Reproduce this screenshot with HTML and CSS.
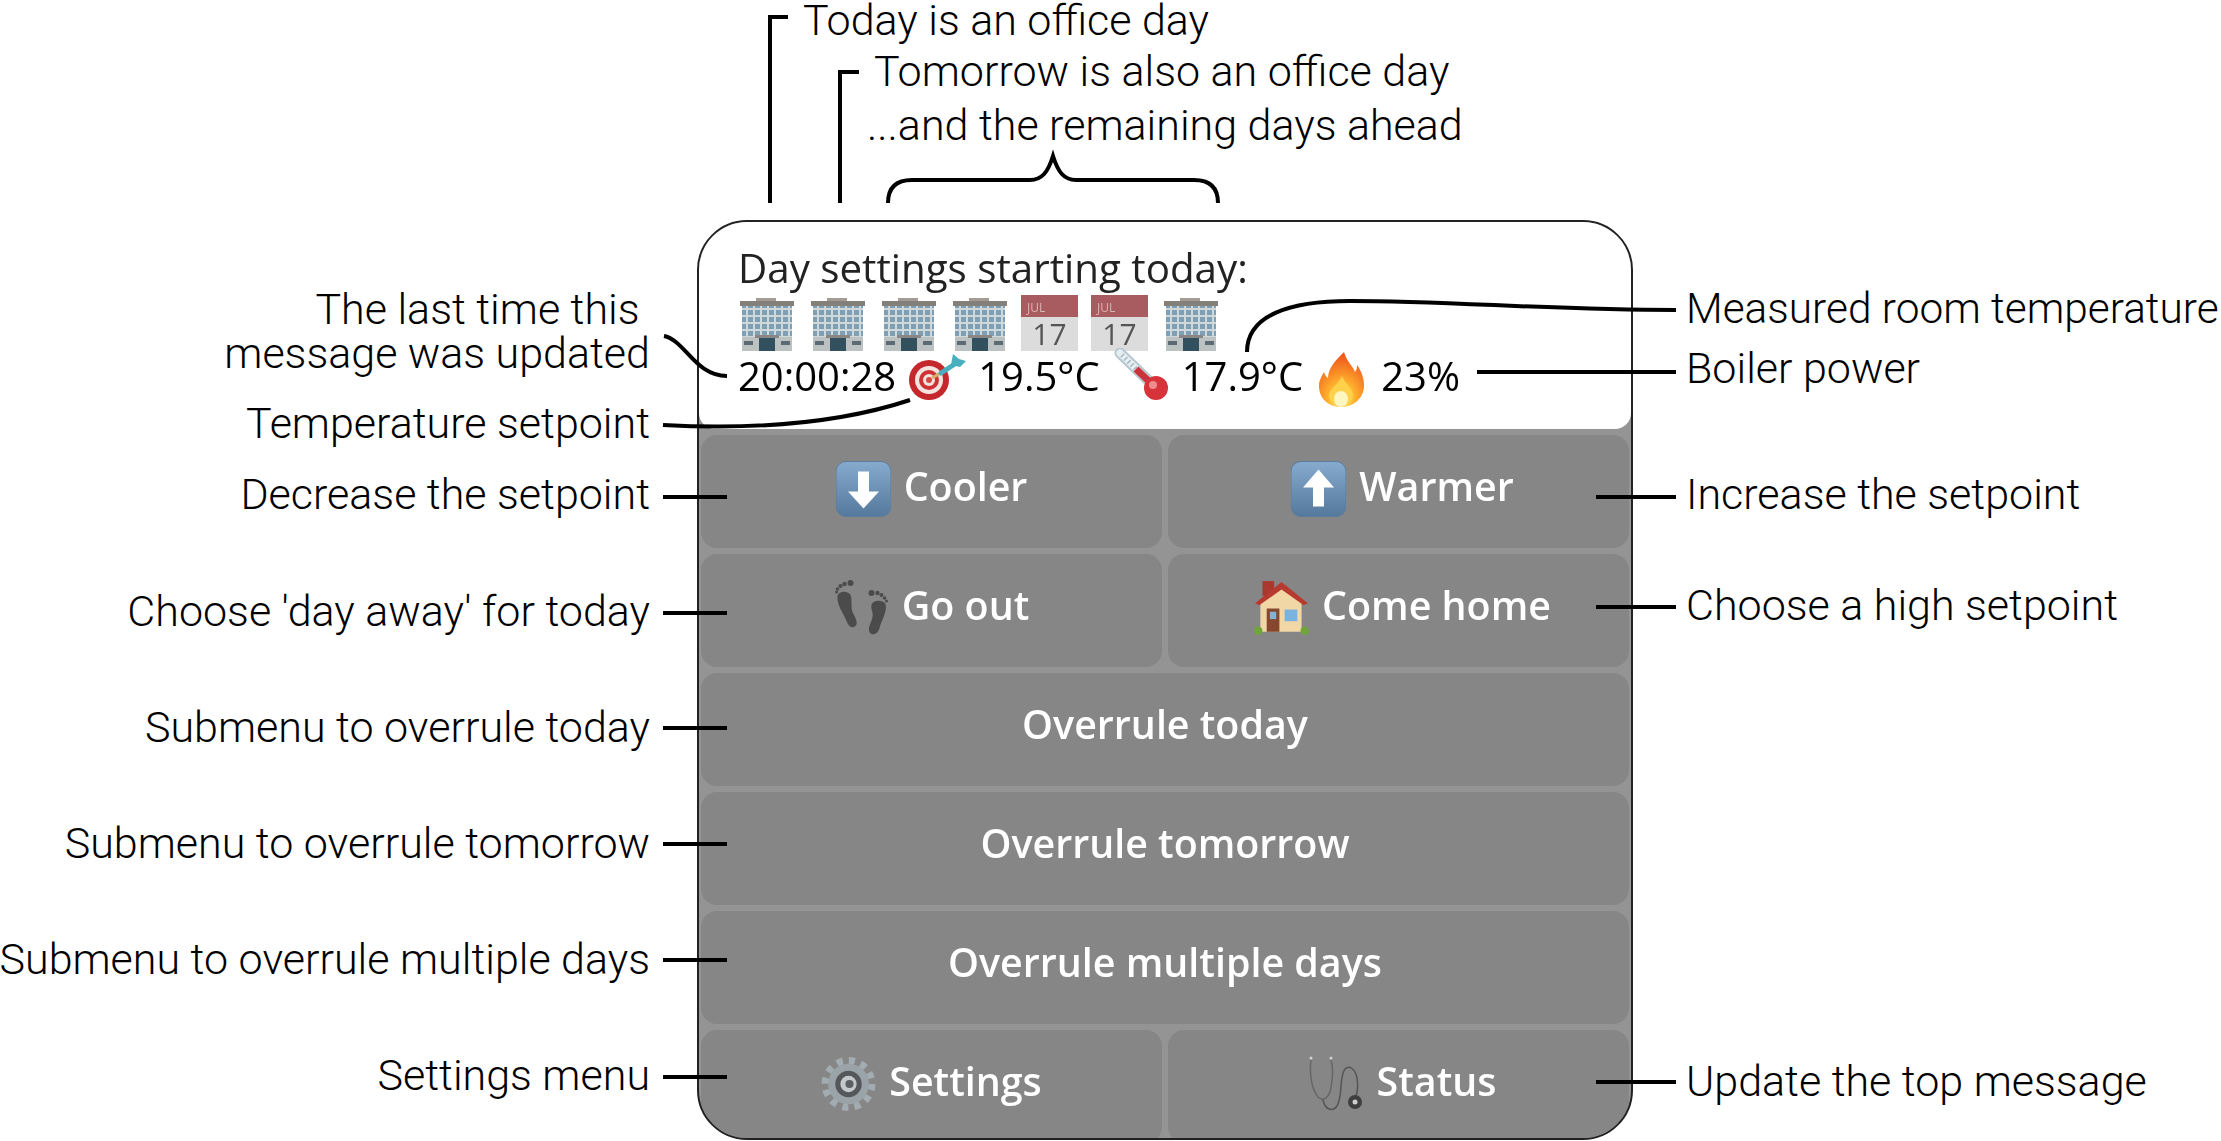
FILE: index.html
```html
<!DOCTYPE html>
<html lang="en">
<head>
    <meta charset="UTF-8">
    <title>Thermostat bot menu</title>
    <link rel="stylesheet" href="styles.css">
</head>
<body>
    <svg class="defs" width="0" height="0">
        <defs>
            <pattern id="windows" width="7" height="7" patternUnits="userSpaceOnUse">
                <rect width="7" height="7" fill="#cfd8db"/>
                <rect x="1" y="1" width="5" height="5" fill="#7f9fb4"/>
            </pattern>
            <linearGradient id="blue" x1="0" y1="0" x2="0" y2="1">
                <stop offset="0" stop-color="#86abcf"/>
                <stop offset="1" stop-color="#55799d"/>
            </linearGradient>
            <radialGradient id="fire" cx="0.5" cy="0.85" r="0.8">
                <stop offset="0" stop-color="#fff3a8"/>
                <stop offset="0.35" stop-color="#ffb52e"/>
                <stop offset="1" stop-color="#f0551c"/>
            </radialGradient>
            <symbol id="building" viewBox="0 0 54 56">
                <rect x="16" y="3" width="20" height="4" fill="#a39c96"/>
                <rect y="6" width="54" height="5" fill="#857f7a"/>
                <rect x="2" y="11" width="50" height="45" fill="url(#windows)"/>
                <rect x="2" y="42" width="50" height="14" fill="#bcc1c2"/>
                <rect x="4" y="46" width="9" height="4" fill="#5b6a73"/>
                <rect x="41" y="46" width="9" height="4" fill="#5b6a73"/>
                <rect x="15" y="40" width="24" height="3" fill="#8a8683"/>
                <rect x="19" y="43" width="16" height="13" fill="#33505f"/>
            </symbol>
            <symbol id="target" viewBox="0 0 60 48">
                <circle cx="23" cy="28" r="20" fill="#c4282c"/>
                <circle cx="23" cy="28" r="14" fill="#f4e4e0"/>
                <circle cx="23" cy="28" r="10" fill="#cf3236"/>
                <circle cx="23" cy="28" r="6" fill="#f4e4e0"/>
                <circle cx="23" cy="28" r="3" fill="#d9483f"/>
                <path d="M26 26 L38 19" stroke="#d7b26a" stroke-width="3"/>
                <path d="M35 21 L52 10" stroke="#49aebd" stroke-width="5" stroke-linecap="round"/>
                <path d="M45 13 L47 2 L53 7 L60 9 L54 15 Z" fill="#49aebd"/>
            </symbol>
            <symbol id="thermo" viewBox="0 0 55 56">
                <path d="M6 5 L40 38" stroke="#b7c8d2" stroke-width="11" stroke-linecap="round"/>
                <path d="M6 5 L40 38" stroke="#e6eef2" stroke-width="7" stroke-linecap="round"/>
                <path d="M8 7 L22 21" stroke="#a9b8c1" stroke-width="5" stroke-dasharray="1.500 3"/>
                <path d="M22 21 L40 38" stroke="#c9343c" stroke-width="7"/>
                <circle cx="42" cy="40" r="12" fill="#d6333b"/>
                <circle cx="39" cy="37" r="4" fill="#f08a8c"/>
            </symbol>
            <symbol id="flame" viewBox="0 0 45 55">
                <path d="M25 0 C28 10 34 14 36 20 C38 18 38 15 38 13 C43 20 45 27 45 33 C45 46 35 55 22 55 C9 55 0 46 0 34 C0 28 3 24 5 20 C6 23 7 25 9 26 C9 16 17 8 25 0 Z" fill="url(#fire)"/>
                <path d="M23 24 C26 32 34 36 34 43 C34 50 28 55 22 55 C15 55 10 50 10 43 C10 37 19 33 23 24 Z" fill="#ffd04a"/>
                <ellipse cx="22" cy="47" rx="7" ry="8" fill="#fff6c0"/>
            </symbol>
            <symbol id="arrow-down" viewBox="0 0 55 55">
                <rect width="55" height="55" rx="10" fill="url(#blue)" stroke="#5b7d9e"/>
                <path d="M22 10 H33 V30 H43 L27.500 47 L12 30 H22 Z" fill="#fff"/>
            </symbol>
            <symbol id="arrow-up" viewBox="0 0 55 55">
                <rect width="55" height="55" rx="10" fill="url(#blue)" stroke="#5b7d9e"/>
                <path d="M22 45 H33 V26 H43 L27.500 8 L12 26 H22 Z" fill="#fff"/>
            </symbol>
            <symbol id="feet" viewBox="0 0 54 56">
                <g fill="#4b4b4b">
                    <path d="M3 16 C4 11 13 10 16 15 C18 21 16 26 18 32 C21 38 24 43 21 46 C17 49 14 46 12 41 C9 33 2 25 3 16 Z"/>
                    <circle cx="16" cy="3" r="3"/><circle cx="10" cy="4" r="2.200"/><circle cx="6" cy="6" r="2"/><circle cx="3" cy="9" r="1.800"/><circle cx="2" cy="12" r="1.500"/>
                    <path d="M37 25 C38 20 48 19 51 24 C53 32 47 40 45 48 C43 55 37 56 35 52 C33 48 37 42 38 37 C39 32 36 30 37 25 Z"/>
                    <circle cx="37" cy="13" r="3"/><circle cx="43" cy="13" r="2.200"/><circle cx="47" cy="15" r="2"/><circle cx="50" cy="18" r="1.800"/><circle cx="52" cy="21" r="1.500"/>
                </g>
            </symbol>
            <symbol id="house" viewBox="0 0 52 53">
                <rect x="8" y="1" width="11" height="14" fill="#a9392f"/>
                <path d="M6 19 L26 5 L45 19 V49 H6 Z" fill="#f1d6a6"/>
                <path d="M1 22 L26 2 L51 22 L47 24 L26 9 L5 24 Z" fill="#b73a30"/>
                <rect x="12" y="27" width="12" height="22" fill="#85472e"/>
                <rect x="15" y="30" width="6" height="7" fill="#7fb4d8"/>
                <rect x="29" y="28" width="12" height="11" fill="#79b3de"/>
                <circle cx="4" cy="48" r="4" fill="#6fa53a"/>
                <circle cx="48" cy="48" r="4" fill="#6fa53a"/>
            </symbol>
            <symbol id="gear" viewBox="0 0 54 55">
                <circle cx="27" cy="27.500" r="23" fill="none" stroke="#a2acb1" stroke-width="7" stroke-dasharray="6 6"/>
                <circle cx="27" cy="27.500" r="20" fill="#9aa3a8"/>
                <circle cx="27" cy="27.500" r="13" fill="#55585b"/>
                <circle cx="27" cy="27.500" r="8" fill="#c4c8ca"/>
                <circle cx="28" cy="27.500" r="4" fill="#5d6063"/>
            </symbol>
            <symbol id="scope" viewBox="0 0 55 56">
                <g fill="none" stroke="#555" stroke-width="1.500">
                    <path d="M2 4 C0 18 3 34 9 41 C14 46 20 42 22 32 C24 20 24 10 22 4" stroke="#666"/>
                    <path d="M14 44 C16 54 24 56 28 50 C34 40 30 20 36 13 C40 9 46 12 48 22 C49 28 49 34 47 40"/>
                </g>
                <circle cx="2" cy="2" r="1.500" fill="#d2d2d2"/>
                <circle cx="22" cy="2" r="1.500" fill="#d2d2d2"/>
                <circle cx="46" cy="46" r="7" fill="#3f3f3f"/>
                <circle cx="46" cy="46" r="2.500" fill="#cfcfcf"/>
            </symbol>
        </defs>
    </svg>

    <div class="stage">
        <div class="card">
            <div class="message">
                <div class="message-title">Day settings starting today:</div>
                <div class="days">
                    <svg class="day"><use href="#building"/></svg>
                    <svg class="day"><use href="#building"/></svg>
                    <svg class="day"><use href="#building"/></svg>
                    <svg class="day"><use href="#building"/></svg>
                    <div class="cal"><div class="cal-month">JUL</div><div class="cal-day">17</div></div>
                    <div class="cal"><div class="cal-month">JUL</div><div class="cal-day">17</div></div>
                    <svg class="day"><use href="#building"/></svg>
                </div>
                <div class="readings">
                    <span>20:00:28</span>
                    <svg class="ic-target"><use href="#target"/></svg>
                    <span>19.5°C</span>
                    <svg class="ic-thermo"><use href="#thermo"/></svg>
                    <span>17.9°C</span>
                    <svg class="ic-flame"><use href="#flame"/></svg>
                    <span>23%</span>
                </div>
            </div>
            <div class="keyboard">
                <div class="key"><svg class="ic-key"><use href="#arrow-down"/></svg>Cooler</div>
                <div class="key key-right"><svg class="ic-key"><use href="#arrow-up"/></svg>Warmer</div>
                <div class="key"><svg class="ic-key"><use href="#feet"/></svg>Go out</div>
                <div class="key key-right"><svg class="ic-key"><use href="#house"/></svg>Come home</div>
                <div class="key wide">Overrule today</div>
                <div class="key wide">Overrule tomorrow</div>
                <div class="key wide">Overrule multiple days</div>
                <div class="key"><svg class="ic-key"><use href="#gear"/></svg>Settings</div>
                <div class="key key-right"><svg class="ic-key"><use href="#scope"/></svg>Status</div>
            </div>
        </div>

        <svg class="leaders" width="2221" height="1141">
            <path d="M788 17 H770 V203"/>
            <path d="M859 72 H840 V203"/>
            <path d="M888 203 C888 188 896 180 912 180 H1030 C1042 180 1048 172 1053 156 C1058 172 1064 180 1076 180 H1194 C1210 180 1218 188 1218 203"/>
            <path d="M664 336 C685 340 695 376 727 376"/>
            <path d="M663 425 C720 428 820 430 910 400"/>
            <path d="M663 497 H727"/>
            <path d="M663 613 H727"/>
            <path d="M663 728 H727"/>
            <path d="M663 844 H727"/>
            <path d="M663 960 H727"/>
            <path d="M663 1077 H727"/>
            <path d="M1247 352 C1247 315 1290 301 1350 301 C1450 301 1550 310 1676 310"/>
            <path d="M1477 372 H1676"/>
            <path d="M1596 497 H1676"/>
            <path d="M1596 607 H1676"/>
            <path d="M1596 1082 H1676"/>
        </svg>

        <div class="note note-today">Today is an office day</div>
        <div class="note note-tomorrow">Tomorrow is also an office day</div>
        <div class="note note-ahead">...and the remaining days ahead</div>

        <div class="note left note-last">The last time this&nbsp;<br>message was updated</div>
        <div class="note left note-setpoint">Temperature setpoint</div>
        <div class="note left note-decrease">Decrease the setpoint</div>
        <div class="note left note-away">Choose 'day away' for today</div>
        <div class="note left note-sub-today">Submenu to overrule today</div>
        <div class="note left note-sub-tomorrow">Submenu to overrule tomorrow</div>
        <div class="note left note-sub-multi">Submenu to overrule multiple days</div>
        <div class="note left note-settings">Settings menu</div>

        <div class="note right note-measured">Measured room temperature</div>
        <div class="note right note-boiler">Boiler power</div>
        <div class="note right note-increase">Increase the setpoint</div>
        <div class="note right note-high">Choose a high setpoint</div>
        <div class="note right note-update">Update the top message</div>
    </div>
</body>
</html>
```

FILE: styles.css
```css
html, body {
    margin: 0;
    background: #fff;
}
.defs {
    position: absolute;
}
.stage {
    position: relative;
    width: 2221px;
    height: 1141px;
    overflow: hidden;
    padding: 220px 0 0 697px;
    box-sizing: border-box;
}

/* the chat card */
.card {
    width: 936px;
    height: 920px;
    box-sizing: border-box;
    border: 2px solid #222;
    border-radius: 50px;
    overflow: hidden;
    background: #949494;
    font-family: "Open Sans", sans-serif;
}
.message {
    height: 207px;
    box-sizing: border-box;
    padding: 21px 0 0 39px;
    background: #fff;
    border-radius: 0 0 16px 16px;
    color: #000;
    filter: blur(.5px);
}
.message-title {
    font-size: 40.3px;
    line-height: 50px;
    color: #222;
}
.days {
    display: flex;
    align-items: flex-end;
    gap: 17px;
    height: 56px;
    margin-left: 2px;
    margin-top: 2px;
}
.day {
    flex: none;
    width: 54px;
    height: 56px;
}
.cal {
    flex: none;
    width: 57px;
    height: 56px;
    margin: 0 -1px 0 -3px;
    background: #dcdcdc;
    text-align: center;
}
.cal-month {
    height: 22px;
    box-sizing: border-box;
    padding-left: 6px;
    background: #a95c60;
    color: #d9b3b5;
    font-size: 12px;
    line-height: 26px;
    text-align: left;
}
.cal-day {
    height: 34px;
    color: #555;
    font-size: 30px;
    line-height: 34px;
}
.readings {
    display: flex;
    align-items: center;
    height: 50px;
    font-size: 40px;
    line-height: 50px;
}
.ic-target {
    flex: none;
    width: 60px;
    height: 48px;
    margin: 0 12px 0 10px;
}
.ic-thermo {
    flex: none;
    width: 55px;
    height: 56px;
    margin: 0 13px 0 14px;
}
.ic-flame {
    flex: none;
    width: 45px;
    height: 55px;
    margin: 6px 17px 0 16px;
}

/* button rows */
.keyboard {
    display: grid;
    grid-template-columns: 1fr 1fr;
    grid-auto-rows: 113px;
    gap: 6px;
    padding: 6px 2px 0;
    filter: blur(.5px);
}
.key {
    display: flex;
    align-items: center;
    justify-content: center;
    gap: 13px;
    box-sizing: border-box;
    padding-bottom: 12px;
    background: #868686;
    border-radius: 16px;
    color: #fff;
    font-size: 39.4px;
    font-weight: 600;
}
.key-right {
    padding-left: 8px;
}
.wide {
    grid-column: span 2;
}
.ic-key {
    flex: none;
    width: 55px;
    height: 56px;
    margin-top: 6px;
}

/* annotations around the card */
.leaders {
    position: absolute;
    left: 0;
    top: 0;
}
.leaders path {
    fill: none;
    stroke: #000;
    stroke-width: 4;
}
.note {
    position: absolute;
    font-family: Roboto, sans-serif;
    font-weight: 300;
    font-size: 43px;
    line-height: 44px;
    color: #000;
    white-space: nowrap;
}
.left {
    right: 1571px;
    text-align: right;
}
.right {
    left: 1686px;
}
.note-today { left: 803px; top: 0; line-height: 40px; }
.note-tomorrow { left: 874px; top: 49px; }
.note-ahead { left: 867px; top: 103px; }
.note-last { top: 287px; }
.note-setpoint { top: 401px; }
.note-decrease { top: 472px; }
.note-away { top: 589px; }
.note-sub-today { top: 705px; }
.note-sub-tomorrow { top: 821px; }
.note-sub-multi { top: 937px; }
.note-settings { top: 1053px; }
.note-measured { top: 287px; font-size: 42.4px; }
.note-boiler { top: 346px; }
.note-increase { top: 472px; }
.note-high { top: 583px; }
.note-update { top: 1059px; }
```
